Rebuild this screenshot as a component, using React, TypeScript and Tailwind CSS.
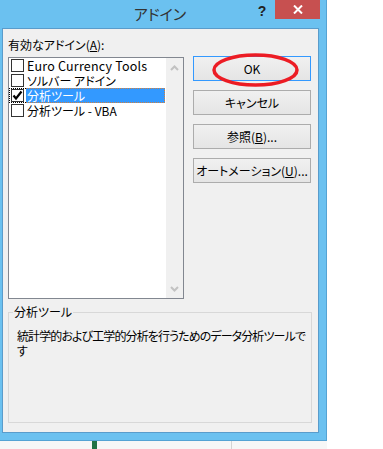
import React from "react";

const FONT = {
  fontFamily: '"Noto Sans CJK JP", "Noto Sans", sans-serif',
  fontFeatureSettings: '"palt"',
};

function Chevron({ up }: { up?: boolean }) {
  return (
    <svg width="9" height="6" viewBox="0 0 9 6" className="block">
      <path
        d={up ? "M1 5 L4.5 1.5 L8 5" : "M1 1 L4.5 4.5 L8 1"}
        fill="none"
        stroke="#c2c2c2"
        strokeWidth="2"
      />
    </svg>
  );
}

function Box({ checked }: { checked?: boolean }) {
  return (
    <div className="w-[13px] h-[13px] border border-[#333333] bg-white shrink-0 flex items-center justify-center">
      {checked && (
        <svg width="11" height="11" viewBox="0 0 11 11" className="block">
          <path d="M1.5 5.5 L4 8.5 L9.5 1.5" fill="none" stroke="#000" strokeWidth="2.2" />
        </svg>
      )}
    </div>
  );
}

function Row({ label, checked, selected, latin }: { label: string; checked?: boolean; selected?: boolean; latin?: boolean }) {
  if (selected) {
    return (
      <div className="h-[15px] flex">
        <div className="w-[17px] h-[15px] flex items-center pl-[1px] border-y border-l border-dotted border-[#000]">
          <Box checked={checked} />
        </div>
        <div className="w-[139px] h-[15px] bg-[#3399ff] text-white text-[12px] leading-[13px] pl-[1px] border-y border-r border-dotted border-[#d08040] whitespace-nowrap">
          {label}
        </div>
      </div>
    );
  }
  return (
    <div className="h-[15px] flex items-center pl-[2px]">
      <Box checked={checked} />
      <div
        className={
          "ml-[3px] leading-[15px] text-black whitespace-nowrap " +
          (latin ? "text-[12.5px] tracking-[0.2px]" : "text-[12px]")
        }
      >
        {label}
      </div>
    </div>
  );
}

function Btn({ children, focused }: { children: React.ReactNode; focused?: boolean }) {
  return (
    <div
      className={
        "h-[25px] w-[118px] flex items-center justify-center text-[12px] text-black bg-gradient-to-b from-[#f0f0f0] to-[#e5e5e5] border " +
        (focused ? "border-[#3399ff]" : "border-[#acacac]")
      }
    >
      {children}
    </div>
  );
}

export default function App() {
  return (
    <div className="relative w-[383px] h-[449px] bg-white overflow-hidden" style={FONT}>
      <div className="w-[327px] h-[441px] bg-[#6bc1f0] border-r border-b border-[#55a3d4] flex flex-col">
        {/* title bar */}
        <div className="h-[28px] grid">
          <div className="col-start-1 row-start-1 justify-self-center pr-[6px] text-[15px] leading-[28px] text-[#333333]">
            アドイン
          </div>
          <div className="col-start-1 row-start-1 justify-self-end flex items-start pr-[6px]">
            <div
              className="w-[26px] h-[19px] flex items-center justify-center text-[14px] font-bold text-[#222] leading-[19px] pt-[3px]"
              style={{ fontFamily: '"Liberation Sans", sans-serif' }}
            >
              ?
            </div>
            <div className="w-[45px] h-[19px] bg-[#c75050] flex items-center justify-center">
              <svg width="10" height="9" viewBox="0 0 10 9">
                <path d="M1 0.5 L9 8.5 M9 0.5 L1 8.5" stroke="#fff" strokeWidth="2" />
              </svg>
            </div>
          </div>
        </div>
        {/* panel */}
        <div className="ml-[2px] w-[317px] h-[405px] bg-[#f0f0f0] border border-[#5a9ccb] pl-[5px] pt-[4px] flex flex-col">
          <div className="flex items-start">
            <div className="w-[176px] flex flex-col">
              <div className="h-[24px] leading-[24px] text-[12px] text-black whitespace-nowrap">
                有効なアドイン(<span className="underline">A</span>):
              </div>
              <div className="h-[242px] w-[176px] border border-[#828790] bg-white flex">
                <div className="flex-1 flex flex-col">
                  <Row label="Euro Currency Tools" latin />
                  <Row label="ソルバー アドイン" />
                  <Row label="分析ツール" checked selected />
                  <Row label="分析ツール - VBA" />
                </div>
                <div className="w-[17px] bg-[#f0f0f0] flex flex-col items-center justify-between pt-[7px] pb-[6px]">
                  <Chevron up />
                  <Chevron />
                </div>
              </div>
            </div>
            <div className="ml-[9px] pt-[23px] flex flex-col gap-[9px]">
              <Btn focused>OK</Btn>
              <Btn>キャンセル</Btn>
              <Btn>
                参照(<span className="underline">B</span>)...
              </Btn>
              <Btn>
                オートメーション(<span className="underline">U</span>)...
              </Btn>
            </div>
          </div>
          <div className="relative mt-[13px] w-[304px] h-[111px] border border-[#d8d8d8]">
            <div className="absolute left-[4px] top-[-9px] bg-[#f0f0f0] px-[1px] text-[12px] leading-[16px] text-black">
              分析ツール
            </div>
            <div className="pl-[8px] pt-[15px] text-[12px] leading-[15px] tracking-[-0.9px] text-black whitespace-nowrap">
              <div>統計学的および工学的分析を行うためのデータ分析ツールで</div>
              <div>す</div>
            </div>
          </div>
        </div>
      </div>
      {/* strip below */}
      <div className="h-[8px] flex">
        <div className="w-[327px] h-[8px] bg-[#f7f7f7] flex">
          <div className="ml-[92px] w-[5px] bg-[#217346]" />
          <div className="ml-[134px] w-[1px] bg-[#d4d4d4]" />
        </div>
      </div>
      {/* red annotation ellipse */}
      <svg className="absolute left-[212px] top-[53px]" width="87" height="34" viewBox="0 0 87 34">
        <ellipse cx="43.5" cy="17" rx="41.5" ry="15" fill="none" stroke="#ec1c24" strokeWidth="3.5" />
      </svg>
    </div>
  );
}
